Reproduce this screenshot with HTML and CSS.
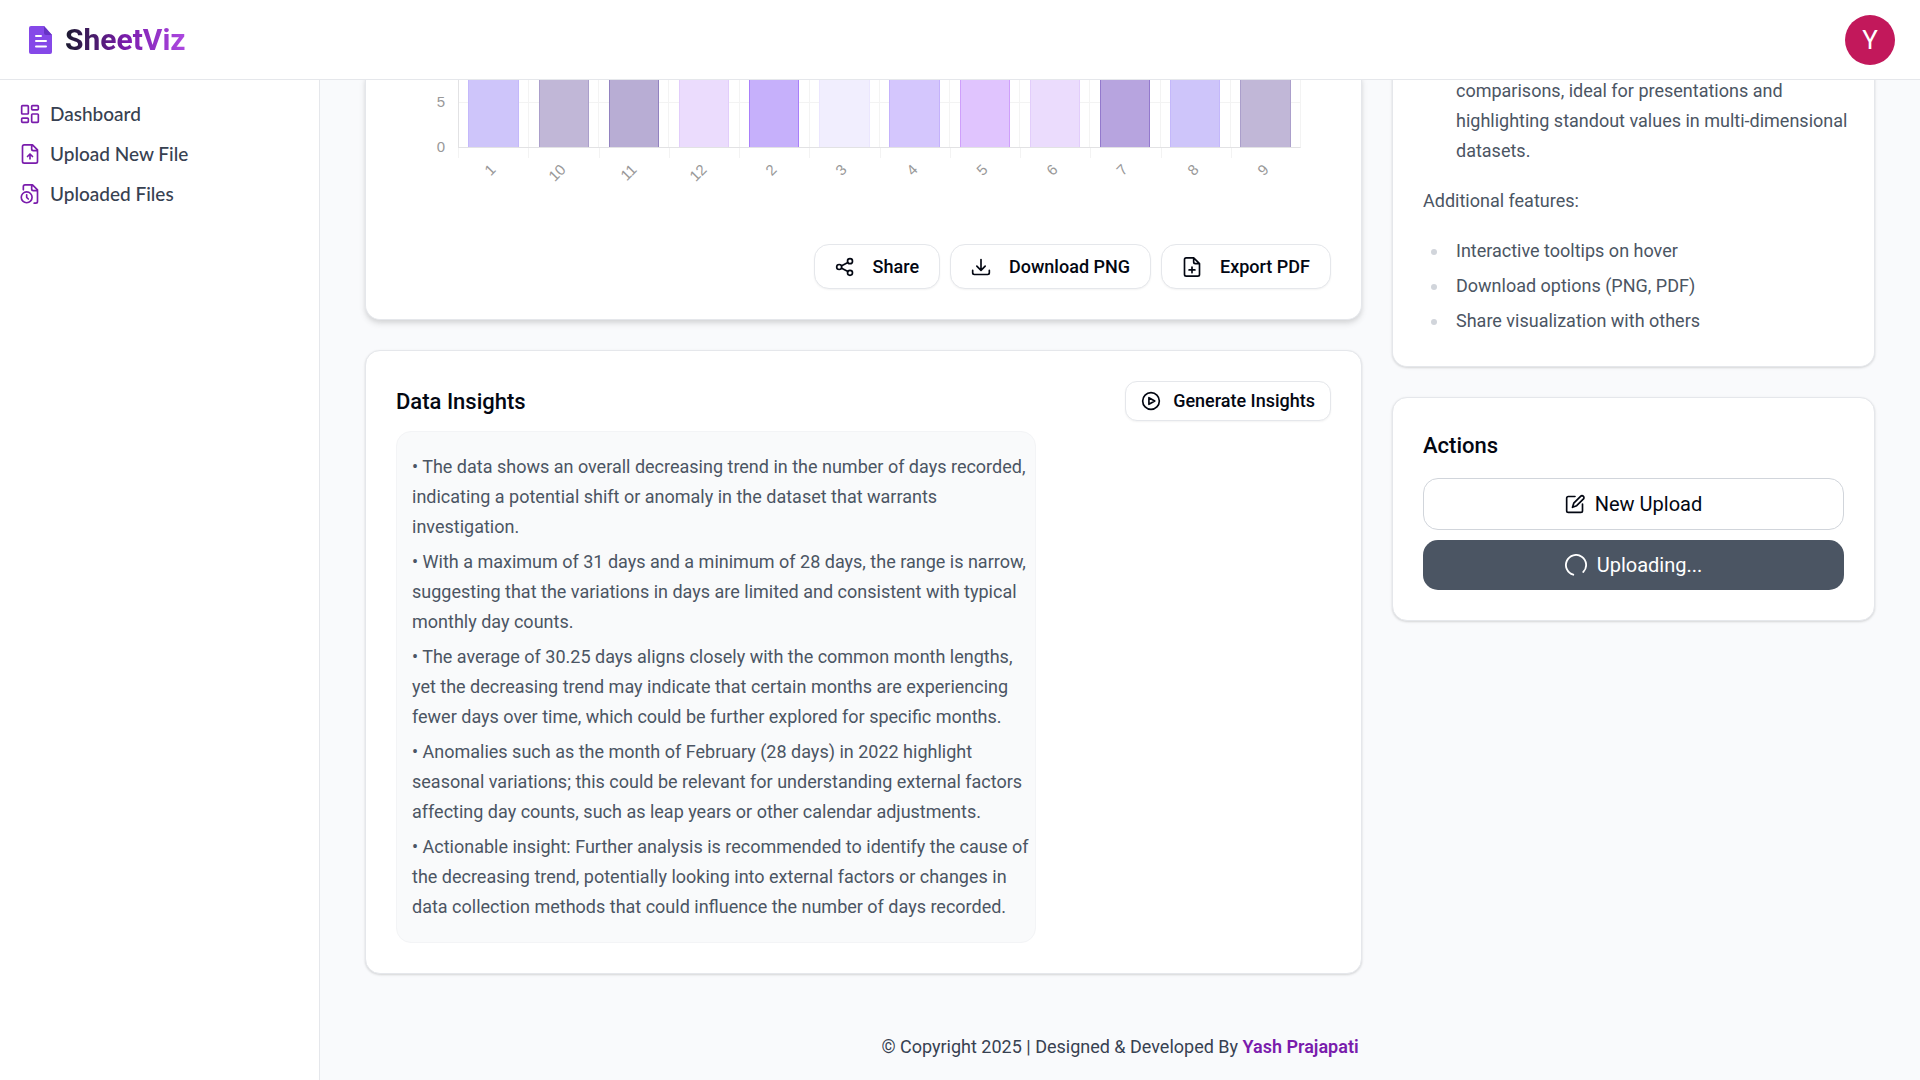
FILE: index.html
```html
<!DOCTYPE html>
<html lang="en">
<head>
<meta charset="utf-8">
<meta name="viewport" content="width=device-width, initial-scale=1">
<title>SheetViz</title>
<link rel="stylesheet" href="styles.css">
</head>
<body>
<header class="topbar">
  <a class="brand" href="#">
    <svg class="brand-icon" viewBox="0 0 24 28" aria-hidden="true">
      <path fill="#8548e8" d="M2 0h13l8 9v17a2 2 0 0 1-2 2H2a2 2 0 0 1-2-2V2a2 2 0 0 1 2-2z"/>
      <path fill="#6633c4" d="M15 0l8 9h-6a2 2 0 0 1-2-2z"/>
      <path stroke="#fff" stroke-width="2" stroke-linecap="round" d="M7 10h5M7 15h10M7 20.500h10"/>
    </svg>
    <span class="brand-name">SheetViz</span>
  </a>
  <button class="avatar" type="button" aria-label="Account">Y</button>
</header>

<div class="shell">
  <nav class="sidebar">
    <a class="nav-link" href="#">
      <svg class="icon" viewBox="0 0 24 24" aria-hidden="true"><rect x="2" y="2" width="8" height="10" rx="1"/><rect x="14" y="2" width="8" height="5" rx="1"/><rect x="14" y="12" width="8" height="10" rx="1"/><rect x="2" y="17" width="8" height="5" rx="1"/></svg>
      Dashboard
    </a>
    <a class="nav-link" href="#">
      <svg class="icon" viewBox="0 0 24 24" aria-hidden="true"><path d="M15 1H5a2 2 0 0 0-2 2v18a2 2 0 0 0 2 2h14a2 2 0 0 0 2-2V7zM14 1v5a2 2 0 0 0 2 2h5M12 18v-6M9 15l3-3 3 3"/></svg>
      Upload New File
    </a>
    <a class="nav-link" href="#">
      <svg class="icon" viewBox="0 0 24 24" aria-hidden="true"><path d="M4 7V3a2 2 0 0 1 2-2h9l6 6v14a2 2 0 0 1-2 2h-2M14 1v5a2 2 0 0 0 2 2h5"/><circle cx="8" cy="16" r="6.500"/><path d="M8 13v3l2 2"/></svg>
      Uploaded Files
    </a>
  </nav>

  <main class="content">
    <div class="columns">
      <div class="column">
        <section class="card card-scrolled card-raised">
          <div class="chart" role="img" aria-label="Bar chart of days by month">
            <div class="y-axis"><span>5</span><span>0</span></div>
            <div class="plot">
              <div class="slot"><i class="bar c1"></i></div>
              <div class="slot"><i class="bar c2"></i></div>
              <div class="slot"><i class="bar c3"></i></div>
              <div class="slot"><i class="bar c4"></i></div>
              <div class="slot"><i class="bar c5"></i></div>
              <div class="slot"><i class="bar c6"></i></div>
              <div class="slot"><i class="bar c7"></i></div>
              <div class="slot"><i class="bar c8"></i></div>
              <div class="slot"><i class="bar c4"></i></div>
              <div class="slot"><i class="bar c9"></i></div>
              <div class="slot"><i class="bar c1"></i></div>
              <div class="slot"><i class="bar c2"></i></div>
            </div>
            <div class="x-axis">
              <div class="tick"><span>1</span></div>
              <div class="tick"><span>10</span></div>
              <div class="tick"><span>11</span></div>
              <div class="tick"><span>12</span></div>
              <div class="tick"><span>2</span></div>
              <div class="tick"><span>3</span></div>
              <div class="tick"><span>4</span></div>
              <div class="tick"><span>5</span></div>
              <div class="tick"><span>6</span></div>
              <div class="tick"><span>7</span></div>
              <div class="tick"><span>8</span></div>
              <div class="tick"><span>9</span></div>
            </div>
          </div>
          <div class="toolbar">
            <button class="btn" type="button">
              <svg class="icon" viewBox="0 0 24 24" aria-hidden="true"><circle cx="18" cy="5" r="3"/><circle cx="5" cy="12" r="3"/><circle cx="18" cy="19" r="3"/><path d="M8 10.500l7.500-4M8 13.500l7.500 4"/></svg>
              Share
            </button>
            <button class="btn" type="button">
              <svg class="icon" viewBox="0 0 24 24" aria-hidden="true"><path d="M2 16v3a2 2 0 0 0 2 2h16a2 2 0 0 0 2-2v-3M12 3v13M7 11l5 5 5-5"/></svg>
              Download PNG
            </button>
            <button class="btn" type="button">
              <svg class="icon" viewBox="0 0 24 24" aria-hidden="true"><path d="M14 1H5a2 2 0 0 0-2 2v18a2 2 0 0 0 2 2h14a2 2 0 0 0 2-2V8zM14 1v5a2 2 0 0 0 2 2h5M12 12v7M8.500 15.500h7"/></svg>
              Export PDF
            </button>
          </div>
        </section>

        <section class="card">
          <div class="card-head">
            <h2 class="card-title">Data Insights</h2>
            <button class="btn btn-small" type="button">
              <svg class="icon" viewBox="0 0 24 24" aria-hidden="true"><circle cx="12" cy="12" r="10"/><path d="M9.500 8l7 4-7 4z"/></svg>
              Generate Insights
            </button>
          </div>
          <div class="insights">
            <p>• The data shows an overall decreasing trend in the number of days recorded, indicating a potential shift or anomaly in the dataset that warrants investigation.</p>
            <p>• With a maximum of 31 days and a minimum of 28 days, the range is narrow, suggesting that the variations in days are limited and consistent with typical monthly day counts.</p>
            <p>• The average of 30.25 days aligns closely with the common month lengths, yet the decreasing trend may indicate that certain months are experiencing fewer days over time, which could be further explored for specific months.</p>
            <p>• Anomalies such as the month of February (28 days) in 2022 highlight seasonal variations; this could be relevant for understanding external factors affecting day counts, such as leap years or other calendar adjustments.</p>
            <p>• Actionable insight: Further analysis is recommended to identify the cause of the decreasing trend, potentially looking into external factors or changes in data collection methods that could influence the number of days recorded.</p>
          </div>
        </section>
      </div>

      <div class="column">
        <section class="card card-scrolled prose">
          <p class="prose-indent">comparisons, ideal for presentations and highlighting standout values in multi-dimensional datasets.</p>
          <p>Additional features:</p>
          <ul class="feature-list">
            <li>Interactive tooltips on hover</li>
            <li>Download options (PNG, PDF)</li>
            <li>Share visualization with others</li>
          </ul>
        </section>

        <section class="card">
          <h2 class="card-title">Actions</h2>
          <div class="actions">
            <button class="action action-outline" type="button">
              <svg class="icon" viewBox="0 0 24 24" aria-hidden="true"><path d="M12 3H4a2 2 0 0 0-2 2v15a2 2 0 0 0 2 2h15a2 2 0 0 0 2-2v-8M20 2a2.500 2.500 0 0 1 2.500 3.500L14 14l-5 2 1.500-5L19 2.500z"/></svg>
              New Upload
            </button>
            <button class="action action-busy" type="button">
              <svg class="icon spinner" viewBox="0 0 24 24" aria-hidden="true"><path d="M9 22.600A11 11 0 1 1 20 19.600"/></svg>
              Uploading...
            </button>
          </div>
        </section>
      </div>
    </div>

    <footer class="footer">© Copyright 2025 | Designed &amp; Developed By <a class="author" href="#">Yash Prajapati</a></footer>
  </main>
</div>
</body>
</html>
```
FILE: styles.css
```css
* {
  box-sizing: border-box;
}

body {
  margin: 0;
  min-height: 100vh;
  display: flex;
  flex-direction: column;
  background: #f9fafc;
  color: #030712;
  font: 400 18px/30px Roboto, sans-serif;
}

h2,
p,
ul {
  margin: 0;
}

button {
  margin: 0;
  font: inherit;
  color: inherit;
  cursor: pointer;
}

a {
  color: inherit;
  text-decoration: none;
}

.icon {
  width: 20px;
  height: 20px;
  flex: none;
  fill: none;
  stroke: currentColor;
  stroke-width: 2;
  stroke-linecap: round;
  stroke-linejoin: round;
}

/* Top bar */
.topbar {
  position: relative;
  z-index: 1;
  flex: none;
  height: 80px;
  padding: 0 25px;
  display: flex;
  align-items: center;
  justify-content: space-between;
  background: #fff;
  border-bottom: 1px solid #e5e7eb;
}

.brand {
  display: flex;
  align-items: center;
  gap: 12px;
  padding-left: 4px;
}

.brand-icon {
  width: 24px;
  height: 28px;
}

.brand-name {
  font-size: 30px;
  line-height: 40px;
  font-weight: 700;
  color: transparent;
  background: linear-gradient(90deg, #1a1a2e, #7a1cac 50%, #ad49e1);
  background-clip: text;
}

.avatar {
  width: 50px;
  height: 50px;
  padding: 0;
  border: 0;
  border-radius: 50%;
  background: #c2185b;
  color: #fff;
  font-size: 26px;
}

/* Layout */
.shell {
  flex: 1;
  display: flex;
}

.sidebar {
  flex: none;
  width: 320px;
  padding: 14px 20px;
  display: flex;
  flex-direction: column;
  background: #fff;
  border-right: 1px solid #e5e7eb;
}

.nav-link {
  display: flex;
  align-items: center;
  gap: 10px;
  height: 40px;
  color: #374151;
  font-family: Lato, sans-serif;
  font-size: 19px;
  font-weight: 500;
}

.nav-link .icon {
  color: #7a1cac;
}

.content {
  flex: 1;
  min-width: 0;
  margin-top: -4px;
  padding: 0 45px 18px;
}

.columns {
  display: grid;
  grid-template-columns: minmax(0, 997fr) minmax(0, 483fr);
  gap: 30px;
  align-items: start;
}

.column {
  display: grid;
  gap: 30px;
}

/* Cards */
.card {
  padding: 30px;
  background: #fff;
  border: 1px solid #e5e7eb;
  border-radius: 15px;
  box-shadow: 0 1px 3px rgba(0, 0, 0, 0.1), 0 1px 2px rgba(0, 0, 0, 0.06);
}

.card-raised {
  box-shadow: 0 4px 6px rgba(0, 0, 0, 0.1), 0 2px 4px rgba(0, 0, 0, 0.06);
}

.card-scrolled {
  padding-top: 0;
  border-top: 0;
  border-top-left-radius: 0;
  border-top-right-radius: 0;
}

.card-head {
  display: flex;
  align-items: center;
  justify-content: space-between;
  margin-bottom: 10px;
}

.card-title {
  font-size: 22px;
  line-height: 35px;
  font-weight: 500;
}

/* Chart */
.chart {
  display: grid;
  grid-template-columns: 62px 1fr;
  grid-template-rows: 72px auto;
  padding-right: 30px;
  color: #999;
  font: 15px/20px "Liberation Sans", sans-serif;
}

.y-axis {
  height: 72px;
  display: flex;
  flex-direction: column;
  align-items: flex-end;
  gap: 25px;
  padding: 16px 13px 0 0;
}

.y-axis span {
  flex: none;
}

.plot {
  display: grid;
  grid-template-columns: repeat(12, 1fr);
  border-bottom: 1px solid #e2e2e4;
  border-right: 1px solid #f3f3f3;
  background: linear-gradient(#f3f3f3, #f3f3f3) 0 26px / 100% 1px no-repeat;
}

.slot {
  display: flex;
  justify-content: center;
  border-left: 1px solid #f3f3f3;
}

.slot:first-child {
  border-left-color: #e2e2e4;
}

.bar {
  width: 73%;
  border: solid;
  border-width: 0 1px;
}

.c1 { background: #cec5fa; border-color: #c4b8fb; }
.c2 { background: #c1b7d7; border-color: #ab9fcb; }
.c3 { background: #b8add4; border-color: #9282c0; }
.c4 { background: #ebdcfd; border-color: #e2cdfb; }
.c5 { background: #c6b0fb; border-color: #a97ffa; }
.c6 { background: #f1eefe; border-color: #ebe6fe; }
.c7 { background: #d4c6fd; border-color: #c4b2fc; }
.c8 { background: #e0c4fe; border-color: #cf9ffb; }
.c9 { background: #b7a4df; border-color: #9379cd; }

.x-axis {
  grid-column: 2;
  display: grid;
  grid-template-columns: repeat(12, 1fr);
}

.tick {
  height: 66px;
  padding-top: 9px;
  background: linear-gradient(#f3f3f3, #f3f3f3) 0 0 / 1px 10px no-repeat;
}

.tick span {
  display: block;
  width: 50%;
  text-align: right;
  transform: rotate(-45deg);
  transform-origin: 100% 50%;
}

/* Buttons */
.toolbar {
  display: flex;
  justify-content: flex-end;
  gap: 10px;
  padding-top: 30px;
}

.btn {
  height: 45px;
  padding: 0 20px;
  display: flex;
  align-items: center;
  gap: 18px;
  background: #fff;
  border: 1px solid #e5e7eb;
  border-radius: 15px;
  box-shadow: 0 1px 2px rgba(0, 0, 0, 0.05);
  font-weight: 500;
}

.btn-small {
  height: 40px;
  padding: 0 15px;
  gap: 12px;
  border-radius: 12px;
}

/* Insights */
.insights {
  max-width: 640px;
  padding: 20px 0 20px 15px;
  display: grid;
  gap: 5px;
  background: #f9fafb;
  border: 1px solid #f3f4f6;
  border-radius: 15px;
  color: #4b5563;
}

/* Text panel */
.prose {
  padding-right: 20px;
  display: grid;
  gap: 20px;
  color: #4b5563;
}

.prose-indent {
  padding-left: 33px;
}

.feature-list {
  padding-left: 26px;
  display: grid;
  gap: 5px;
}

.feature-list li {
  padding-left: 7px;
}

.feature-list li::marker {
  color: #d1d5db;
}

/* Actions */
.actions {
  margin-top: 15px;
  display: grid;
  gap: 10px;
}

.action {
  height: 50px;
  display: flex;
  align-items: center;
  justify-content: center;
  gap: 10px;
  border: 0;
  border-radius: 15px;
  font-size: 20px;
}

.action-outline {
  height: 52px;
  background: #fff;
  border: 1px solid #d1d5db;
}

.action-busy {
  background: #4b5563;
  color: #fff;
}

.spinner {
  width: 22px;
  height: 22px;
}

.footer {
  padding-top: 58px;
  text-align: center;
  color: #374151;
}

.author {
  color: #7a1cac;
  font-weight: 600;
}
```
